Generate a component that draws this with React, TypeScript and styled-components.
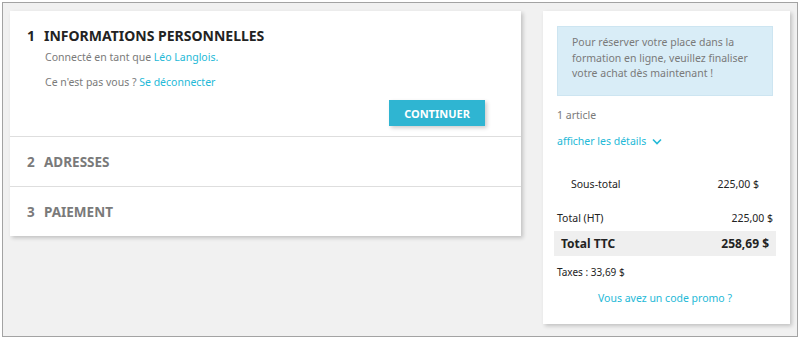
import React from "react";
import styled, { createGlobalStyle } from "styled-components";

const Global = createGlobalStyle`
  html, body { margin: 0; padding: 0; background: #ffffff; }
  body { font-family: "Noto Sans", "Open Sans", sans-serif; }
  * { box-sizing: border-box; }
`;

const Frame = styled.div`
  margin: 2px;
  height: 335px;
  border: 1px solid #a3a3a3;
  background: #f1f1f1;
  padding: 8px 6px 0 7px;
  display: flex;
  align-items: flex-start;
  gap: 22px;
`;

const Steps = styled.section`
  width: 511px;
  background: #fff;
  box-shadow: 2px 2px 4px 0 rgba(0, 0, 0, 0.2);
`;

const Step = styled.div<{ $active?: boolean }>`
  border-bottom: 1px solid #dedede;
  padding: ${(p) => (p.$active ? "16px 36px 10px 16px" : "0 16px")};
  height: ${(p) => (p.$active ? "126px" : "50px")};
  display: flex;
  flex-direction: column;
  justify-content: ${(p) => (p.$active ? "flex-start" : "center")};
  &:last-child { border-bottom: none; height: 49px; }
`;

const StepTitle = styled.h1<{ $active?: boolean }>`
  margin: 0;
  font-size: ${(p) => (p.$active ? "14px" : "13.5px")};
  line-height: 18px;
  font-weight: 700;
  text-transform: uppercase;
  color: ${(p) => (p.$active ? "#232323" : "#7a7a7a")};
  display: flex;
`;

const StepNum = styled.span`
  display: inline-block;
  width: 18px;
  padding-left: 1px;
`;

const Para = styled.p`
  margin: 0 0 0 19px;
  font-size: 10.5px;
  line-height: 15px;
  color: #7a7a7a;
  & + & { margin-top: 10px; }
`;

const Spacer = styled.div`
  height: 5px;
`;

const Link = styled.a`
  color: #24b9d7;
  text-decoration: none;
`;

const Actions = styled.div`
  display: flex;
  justify-content: flex-end;
  margin-top: 10px;
`;

const Button = styled.button`
  background: #2fb5d2;
  border: none;
  color: #fff;
  font-family: "Noto Sans", sans-serif;
  font-weight: 700;
  font-size: 11px;
  text-transform: uppercase;
  width: 96px;
  height: 26px;
  padding: 0;
  box-shadow: 2px 2px 4px 0 rgba(0, 0, 0, 0.2);
`;

const Summary = styled.aside`
  width: 247px;
  height: 313px;
  background: #fff;
  box-shadow: 2px 2px 4px 0 rgba(0, 0, 0, 0.2);
  padding: 15px 17px 0 14px;
  display: flex;
  flex-direction: column;
`;

const InfoBox = styled.div`
  background: #d9edf7;
  border: 1px solid #cde5f1;
  height: 70px;
  padding: 8px 8px 0 14px;
  font-size: 10.5px;
  line-height: 15.5px;
  color: #7a7a7a;
`;

const Muted = styled.div`
  font-size: 10.5px;
  line-height: 15px;
  color: #7a7a7a;
  margin-top: 12px;
`;

const DetailsLink = styled.a`
  font-size: 10.5px;
  line-height: 15px;
  color: #24b9d7;
  text-decoration: none;
  display: flex;
  align-items: center;
  gap: 6px;
  margin-top: 11px;
`;

const Line = styled.div<{ $inset?: boolean }>`
  display: flex;
  justify-content: space-between;
  font-size: 10.5px;
  line-height: 15px;
  color: #232323;
  padding: 0 ${(p) => (p.$inset ? "14px" : "0")};
`;

const Gap = styled.div<{ $h: number }>`
  height: ${(p) => p.$h}px;
`;

const Band = styled.div`
  display: flex;
  justify-content: space-between;
  align-items: center;
  background: #efefef;
  margin: 5px -3px 0 -3px;
  height: 25px;
  padding: 0 7px;
  font-size: 12px;
  font-weight: 700;
  color: #232323;
`;

const Taxes = styled.div`
  font-size: 10px;
  line-height: 15px;
  color: #232323;
  margin-top: 9px;
`;

const Promo = styled.a`
  display: block;
  text-align: center;
  font-size: 10.5px;
  line-height: 15px;
  color: #24b9d7;
  text-decoration: none;
  margin-top: 11px;
`;

const Chevron = () => (
  <svg width="10" height="7" viewBox="0 0 10 7" fill="none">
    <path d="M1 1.5 L5 5.5 L9 1.5" stroke="#24b9d7" strokeWidth="1.6" />
  </svg>
);

export default function App() {
  return (
    <>
      <Global />
      <Frame>
        <Steps>
          <Step $active>
            <StepTitle $active>
              <StepNum>1</StepNum>Informations personnelles
            </StepTitle>
            <Spacer />
            <Para>
              Connecté en tant que <Link href="#">Léo Langlois.</Link>
            </Para>
            <Para>
              Ce n'est pas vous ? <Link href="#">Se déconnecter</Link>
            </Para>
            <Actions>
              <Button>Continuer</Button>
            </Actions>
          </Step>
          <Step>
            <StepTitle>
              <StepNum>2</StepNum>Adresses
            </StepTitle>
          </Step>
          <Step>
            <StepTitle>
              <StepNum>3</StepNum>Paiement
            </StepTitle>
          </Step>
        </Steps>
        <Summary>
          <InfoBox>
            Pour réserver votre place dans la formation en ligne, veuillez
            finaliser votre achat dès maintenant !
          </InfoBox>
          <Muted>1 article</Muted>
          <DetailsLink href="#">
            afficher les détails <Chevron />
          </DetailsLink>
          <Gap $h={28} />
          <Line $inset>
            <span>Sous-total</span>
            <span>225,00 $</span>
          </Line>
          <Gap $h={19} />
          <Line>
            <span>Total (HT)</span>
            <span>225,00 $</span>
          </Line>
          <Band>
            <span>Total TTC</span>
            <span>258,69 $</span>
          </Band>
          <Taxes>Taxes : 33,69 $</Taxes>
          <Promo href="#">Vous avez un code promo ?</Promo>
        </Summary>
      </Frame>
    </>
  );
}
